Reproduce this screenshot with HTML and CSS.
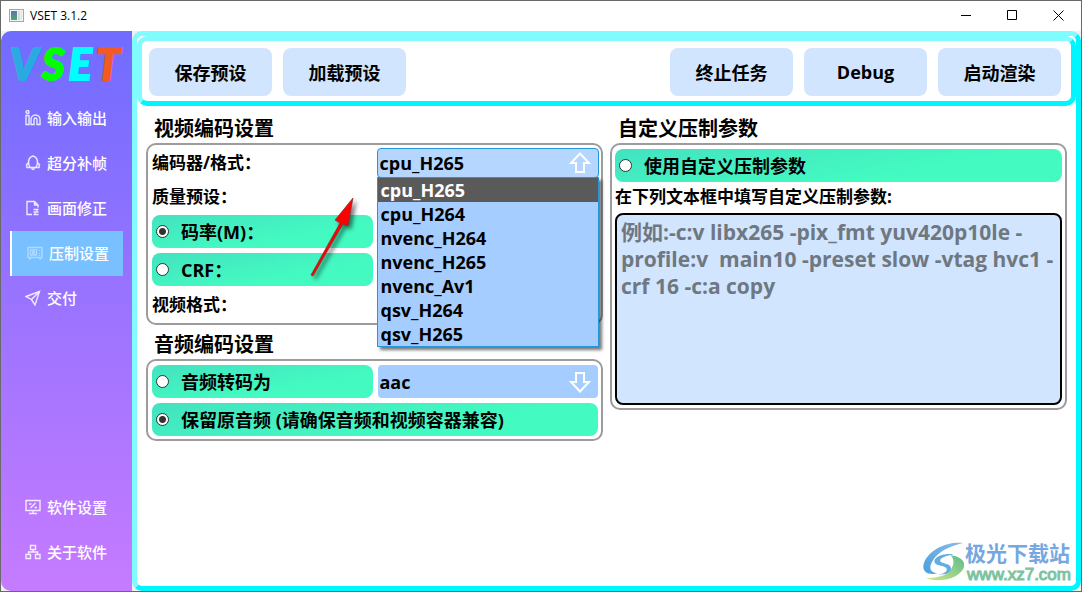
FILE: index.html
```html
<!DOCTYPE html>
<html lang="zh-CN">
<head>
<meta charset="utf-8">
<title>VSET 3.1.2</title>
<link rel="stylesheet" href="styles.css">
</head>
<body>
<div class="window">
  <header class="titlebar">
    <svg class="app-icon" width="15" height="13" viewBox="0 0 15 13">
      <defs><linearGradient id="screen" x1="0" y1="0" x2="0" y2="1"><stop offset="0" stop-color="#5577a8"/><stop offset="1" stop-color="#48a878"/></linearGradient></defs>
      <rect x=".5" y=".5" width="14" height="12" fill="#f4f4f4" stroke="#a3a7ab"/>
      <rect x="2" y="2" width="6" height="9" fill="url(#screen)"/>
      <rect x="9" y="2" width="2" height="9" fill="#d3d8dd"/><rect x="12" y="2" width="1" height="9" fill="#dfe2e5"/>
    </svg>
    <h1 class="title">VSET 3.1.2</h1>
    <div class="window-buttons">
      <button class="window-button" aria-label="最小化"><svg width="11" height="11" viewBox="0 0 11 11"><path d="M0 5.500h10"/></svg></button>
      <button class="window-button" aria-label="最大化"><svg width="11" height="11" viewBox="0 0 11 11"><path d="M.5 .5h9v9h-9z"/></svg></button>
      <button class="window-button" aria-label="关闭"><svg width="11" height="11" viewBox="0 0 11 11"><path d="M.5 .5l10 10M10.500 .5l-10 10"/></svg></button>
    </div>
  </header>
  <div class="body">
    <aside class="sidebar">
      <div class="logo"><span class="logo-v">V</span><span class="logo-s">S</span><span class="logo-e">E</span><span class="logo-t">T</span></div>
      <nav class="nav">
        <button class="nav-item">
          <svg class="nav-icon" viewBox="0 0 16 16"><circle cx="2.500" cy="2" r="1.500"/><path d="M1 5.500h3v9H1zM6 14.500V9.500a4.500 4.500 0 0 1 9 0v5h-3v-5a1.500 1.500 0 0 0-3 0v5z"/></svg>
          输入输出</button>
        <button class="nav-item">
          <svg class="nav-icon" viewBox="0 0 16 16"><path d="M8 1C5.500 1.800 3.500 4 3.500 7.300c0 2 .5 3.700 1.700 5.200h5.600c1.200-1.500 1.700-3.200 1.700-5.200C12.500 4 10.500 1.800 8 1zM3.500 7.500L1.500 9.800l.5 2.700h3M12.500 7.500l2 2.300-.5 2.700h-3M6.500 12.500c.3 2.600 2.700 2.600 3 0"/></svg>
          超分补帧</button>
        <button class="nav-item">
          <svg class="nav-icon" viewBox="0 0 16 16"><path d="M7 14.500H2v-13h7.500L13 5v2.500M9.500 1.500V5H13M8.500 9.500h5M8.500 12h5M8.500 14.500h5M12 9v2M10 11.500v2"/></svg>
          画面修正</button>
        <button class="nav-item nav-item-active">
          <svg class="nav-icon" viewBox="0 0 16 16"><path d="M1 2.500h14v10H1zM3.500 5h6v5h-6zM3 13v2M13 13v2M12.500 5v1M12.500 8v1M12.500 10v1"/><circle cx="6.500" cy="7.500" r="1"/></svg>
          压制设置</button>
        <button class="nav-item">
          <svg class="nav-icon" viewBox="0 0 16 16"><path d="M14.500 1.500L1 6.500l5.500 3L10 15zM14.500 1.500l-8 8"/></svg>
          交付</button>
        <button class="nav-item nav-item-settings">
          <svg class="nav-icon" viewBox="0 0 16 16"><path d="M1 1.500h14v10H1zM8 11.500v3M4 14.500h8M5.500 9l5-5M4 5h2.500M9.500 8.500H12"/></svg>
          软件设置</button>
        <button class="nav-item">
          <svg class="nav-icon" viewBox="0 0 16 16"><path d="M5.500 1.500h5v4h-5zM1 10.500h4.500v4H1zM10.500 10.500H15v4h-4.500zM8 5.500V8M3.500 10.500V8h9v2.500"/></svg>
          关于软件</button>
      </nav>
    </aside>
    <main class="main">
      <div class="toolbar">
        <button class="action">保存预设</button>
        <button class="action">加载预设</button>
        <button class="action action-end">终止任务</button>
        <button class="action">Debug</button>
        <button class="action">启动渲染</button>
      </div>
      <div class="columns">
        <div class="column">
          <section>
            <h2 class="heading">视频编码设置</h2>
            <div class="group video-grid">
              <label class="field-label" for="encoder">编码器/格式：</label>
              <div class="combo combo-open">
                <select class="select" id="encoder"><option>cpu_H265</option><option>cpu_H264</option><option>nvenc_H264</option><option>nvenc_H265</option><option>nvenc_Av1</option><option>qsv_H264</option><option>qsv_H265</option></select>
                <svg class="combo-arrow" viewBox="0 0 22 22"><path d="M11 1.500L2 11h5v9h8v-9h5z"/></svg>
                <ul class="popup" role="listbox" aria-label="编码器/格式">
                  <li class="option option-current" role="option" aria-selected="true">cpu_H265</li>
                  <li class="option" role="option">cpu_H264</li>
                  <li class="option" role="option">nvenc_H264</li>
                  <li class="option" role="option">nvenc_H265</li>
                  <li class="option" role="option">nvenc_Av1</li>
                  <li class="option" role="option">qsv_H264</li>
                  <li class="option" role="option">qsv_H265</li>
                </ul>
              </div>
              <span class="field-label first-col">质量预设：</span>
              <label class="radio-bar first-col"><input class="radio" type="radio" name="rate" checked>码率(M)：</label>
              <label class="radio-bar first-col"><input class="radio" type="radio" name="rate">CRF：</label>
              <span class="field-label first-col">视频格式：</span>
              <svg class="pointer" width="60" height="96" viewBox="0 0 60 96"><path d="M7 86L5 85 34 33l-5-3L47 8l-5 28-5-2z" fill="#f00" stroke="#733" stroke-width=".7"/></svg>
            </div>
          </section>
          <section>
            <h2 class="heading heading-second">音频编码设置</h2>
            <div class="group audio-grid">
              <label class="radio-bar"><input class="radio" type="radio" name="audio">音频转码为</label>
              <div class="combo">
                <select class="select" aria-label="音频转码为"><option>aac</option></select>
                <svg class="combo-arrow" viewBox="0 0 22 22"><path d="M11 20.500L2 11h5V2h8v9h5z"/></svg>
              </div>
              <label class="radio-bar full-row"><input class="radio" type="radio" name="audio" checked>保留原音频 (请确保音频和视频容器兼容)</label>
            </div>
          </section>
        </div>
        <section class="column">
          <h2 class="heading">自定义压制参数</h2>
          <div class="group custom">
            <label class="radio-bar"><input class="radio" type="radio" name="custom">使用自定义压制参数</label>
            <label class="field-label params-label" for="params">在下列文本框中填写自定义压制参数:</label>
            <textarea class="params" id="params" placeholder="例如:-c:v libx265 -pix_fmt yuv420p10le -&#10;profile:v  main10 -preset slow -vtag hvc1 -&#10;crf 16 -c:a copy"></textarea>
          </div>
        </section>
      </div>
      <div class="watermark">
        <svg width="42" height="40" viewBox="0 0 44 42">
          <defs>
            <linearGradient id="blue" x1="0" y1="1" x2="1" y2="0"><stop offset="0" stop-color="#4b9fdd"/><stop offset="1" stop-color="#8abcea"/></linearGradient>
            <linearGradient id="green" x1="0" y1="1" x2="1" y2="0"><stop offset="0" stop-color="#d6e787"/><stop offset="1" stop-color="#59bc8c"/></linearGradient>
          </defs>
          <path d="M43 1C27-1 7 8 2 22c-3 9 4 13 14 11-8-1-9-6-5-13C16 10 30 4 43 1z" fill="url(#blue)"/>
          <path d="M30 14c16 2 18 12 9 19-8 7-22 9-35 5 12 0 21-2 26-9 4-5 4-11 0-15z" fill="url(#green)"/>
          <path d="M33 13c-11-2-21 3-20 8 1 5 13 3 13 8 0 3-5 5-9 5 9 1 15-3 13-8-2-4-12-3-11-7 1-3 7-5 14-6z" fill="#62aee2"/>
        </svg>
        <div><div class="watermark-name">极光下载站</div><div class="watermark-url">www.xz7.com</div></div>
      </div>
    </main>
  </div>
</div>
</body>
</html>
```
FILE: styles.css
```css
* { box-sizing: border-box; }
body {
  margin: 0;
  color: #000;
  font-family: "Open Sans", "Noto Sans CJK SC", sans-serif;
}
button, select, textarea, input { font: inherit; color: inherit; margin: 0; }
button { border: 0; padding: 0; background: none; }
.window {
  min-height: 100vh;
  display: flex;
  flex-direction: column;
  border: 1px solid #696969;
  background: #f0f0f0;
}
.titlebar {
  height: 30px;
  display: flex;
  align-items: center;
  padding: 0 0 2px 8px;
  background: #fff;
}
.title { margin: 0 0 0 6px; font-size: 12px; font-weight: 400; }
.window-buttons { display: flex; margin-left: auto; }
.window-button { width: 46px; height: 28px; display: grid; place-items: center; }
.window-button path { fill: none; stroke: #000; }
.body { flex: 1; display: flex; }

.sidebar {
  width: 131px;
  display: flex;
  flex-direction: column;
  padding: 0 9px 16px;
  border-radius: 10px 0 0 10px;
  background: linear-gradient(#706cff, #c67bff);
}
.logo {
  height: 65px;
  display: flex;
  align-items: center;
  justify-content: space-between;
  padding-right: 3px;
  font: italic 900 43px/65px Lato, sans-serif;
  -webkit-text-stroke: 2px currentColor;
}
.logo-v { color: #29abe2; }
.logo-s { color: #0f0; }
.logo-e { color: #0ff; }
.logo-t { color: #f15a24; }
.nav { flex: 1; display: flex; flex-direction: column; }
.nav-item {
  height: 45px;
  display: flex;
  align-items: center;
  gap: 6px;
  padding: 0 0 2px 15px;
  color: #fff;
  font-size: 15px;
  font-weight: 500;
}
.nav-item-active { border-left: 2px solid #fff; background: #78c0ff; }
.nav-item-active .nav-icon { opacity: .4; }
.nav-item-settings { margin-top: auto; }
.nav-icon { width: 16px; height: 16px; fill: none; stroke: #fff; stroke-width: 1.4; opacity: .85; }

.main {
  position: relative;
  flex: 1;
  min-width: 0;
  border: 5px solid;
  border-color: #80fbff #00f6ff #00f6ff #80fbff;
  border-radius: 10px;
  background: #fff;
}
.toolbar {
  display: flex;
  gap: 11px;
  padding: 7px 10px 5px 7px;
  border: 5px solid;
  border-color: #80fbff #00f6ff #00f6ff #80fbff;
  border-radius: 10px;
}
.action {
  flex: 0 1 123px;
  height: 48px;
  border-radius: 8px;
  background: #d1e5ff;
  font-size: 18px;
  font-weight: 700;
}
.action-end { margin-left: auto; }

.columns {
  display: grid;
  grid-template-columns: 1fr 1fr;
  align-items: start;
  gap: 7px;
  padding: 8px 9px 0;
}
.heading { margin: 0; padding: 1px 0 0 8px; font-size: 20px; line-height: 28px; font-weight: 700; }
.heading-second { padding-top: 6px; }
.group { border: 2px solid #9c9c9c; border-radius: 10px; padding: 4px; }
.video-grid, .audio-grid {
  position: relative;
  display: grid;
  grid-template-columns: 1fr 1fr;
  gap: 5px;
  padding: 4px 3px 3px 4px;
}
.video-grid { grid-template-rows: 30px 27px 33px 33px 27px; padding: 3px 3px 5px 4px; }
.first-col { grid-column: 1; }
.full-row { grid-column: 1 / -1; }
.field-label { align-self: center; font-size: 17px; line-height: 26px; font-weight: 700; }
.radio-bar {
  height: 33px;
  display: flex;
  align-items: center;
  gap: 12px;
  padding: 0 0 0 4px;
  border-radius: 8px;
  background: linear-gradient(170deg, #43e2c0, #43fac1 65%);
  font-size: 18px;
  line-height: 24px;
  font-weight: 700;
}
.radio {
  appearance: none;
  flex: none;
  width: 13px;
  height: 13px;
  border: 1px solid #333;
  border-radius: 50%;
  background: #fff;
}
.radio:checked { background: radial-gradient(circle, #333 3px, #fff 4px); }
.combo { position: relative; border-radius: 4px; background: #a6cdff; }
.combo-open { margin: 0 -1px; border: 1px solid #2496dc; background: #b5d6ff; }
.select {
  display: block;
  width: 100%;
  height: 100%;
  appearance: none;
  border: 0;
  padding: 0 2px;
  background: none;
  font-size: 18px;
  font-weight: 700;
}
.combo-arrow {
  position: absolute;
  top: 50%;
  right: 7px;
  width: 22px;
  height: 22px;
  margin-top: -11px;
  fill: none;
  stroke: #fff;
  stroke-width: 2;
}
.popup {
  position: absolute;
  z-index: 1;
  top: 100%;
  left: -1px;
  right: -1px;
  margin: 0;
  padding: 0;
  list-style: none;
  border: 1px solid #2496dc;
  background: #a6cdff;
  box-shadow: 3px 3px 3px #0008;
}
.option { padding-left: 3px; font-size: 18px; line-height: 24px; font-weight: 700; }
.option-current { background: #5a5a5a; color: #fff; }
.pointer { position: absolute; left: 158px; top: 45px; filter: drop-shadow(3px 3px 2px #0008); }

.custom { display: flex; flex-direction: column; padding: 4px 3px 3px; }
.params-label { align-self: flex-start; padding: 2px 0 3px; }
.params {
  width: 100%;
  height: 192px;
  resize: none;
  padding: 4px;
  border: 2px solid #000;
  border-radius: 8px;
  background: #d1e5ff;
  font-size: 21px;
  line-height: 27px;
  font-weight: 700;
}
.params::placeholder { color: #6f7780; }

.watermark { position: absolute; right: 5px; bottom: 2px; display: flex; align-items: center; gap: 1px; }
.watermark-name { color: #75a8df; font-size: 21px; line-height: 26px; font-weight: 700; }
.watermark-url { padding-left: 2px; color: #7cc3a0; font: 400 17px/18px "Liberation Sans", sans-serif; -webkit-text-stroke: 1px currentColor; }
```
